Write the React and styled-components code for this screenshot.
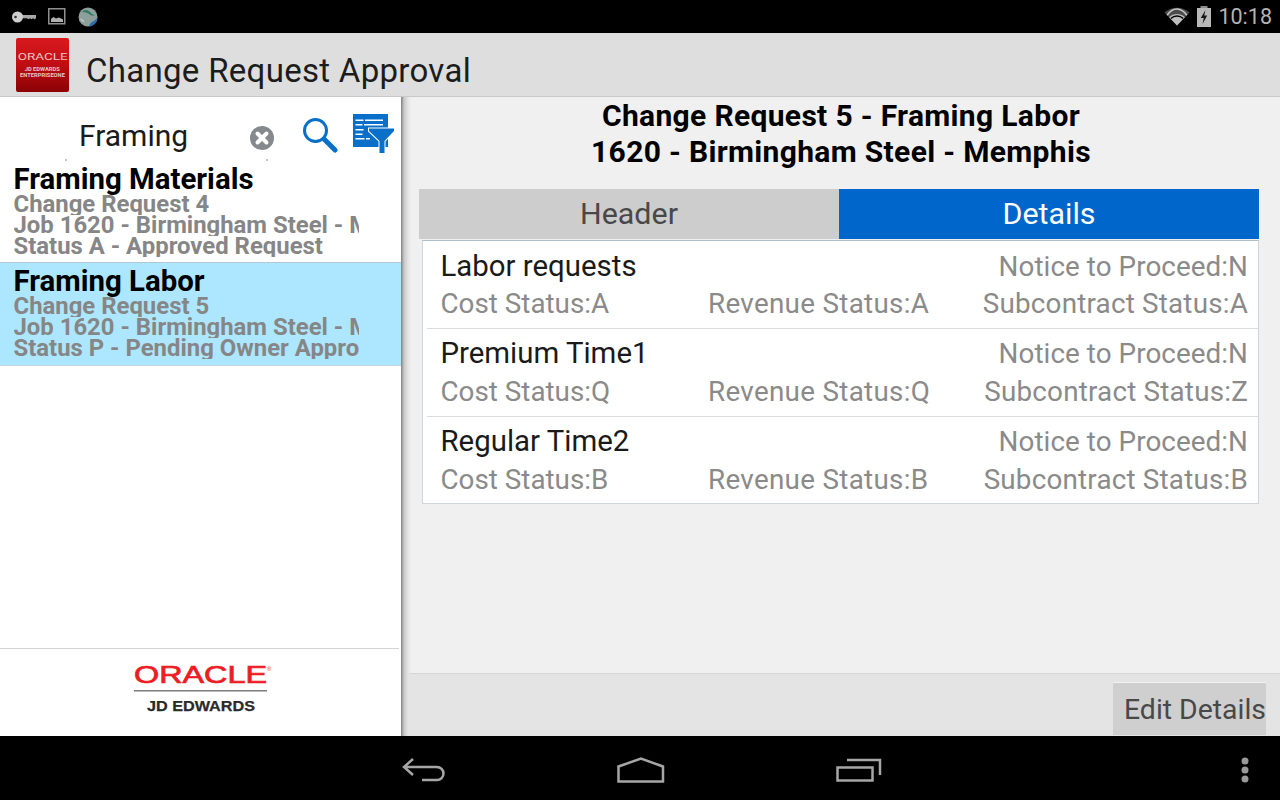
import React from 'react';
import styled, { createGlobalStyle } from 'styled-components';

const GlobalStyle = createGlobalStyle`
  html, body {
    margin: 0;
    padding: 0;
    background: #000;
  }
  * {
    box-sizing: border-box;
  }
`;

const Screen = styled.div`
  width: 1280px;
  height: 800px;
  display: flex;
  flex-direction: column;
  overflow: hidden;
  font-family: Roboto, "Liberation Sans", sans-serif;
  background: #000;
`;

const StatusBar = styled.div`
  height: 33px;
  flex: none;
  display: flex;
  align-items: center;
  justify-content: space-between;
  padding: 0 8px 0 12px;
  background: #000;
`;

const StatusGroup = styled.div`
  display: flex;
  align-items: center;
  gap: ${(p) => p.$gap}px;
`;

const Clock = styled.span`
  font-size: 21.5px;
  line-height: 33px;
  color: #b4b4b4;
`;

const ActionBar = styled.div`
  height: 64px;
  flex: none;
  display: flex;
  align-items: center;
  gap: 17px;
  padding: 0 0 0 16px;
  background: #dedede;
  border-bottom: 1px solid #c8c8c8;
`;

const AppIcon = styled.div`
  width: 53px;
  height: 54px;
  margin-top: 1px;
  display: flex;
  flex-direction: column;
  align-items: center;
  justify-content: center;
  border-radius: 2px;
  color: #ecc4c4;
  background: linear-gradient(180deg, #d81a1f 0%, #c00d12 50%, #8a0104 100%);
`;

const AppIconBrand = styled.span`
  font-size: 9px;
  line-height: 10px;
  margin-bottom: 4px;
  font-weight: 400;
  transform: scaleX(1.5);
`;

const AppIconLine = styled.span`
  font-size: 5px;
  line-height: 6px;
  font-weight: 700;
  white-space: nowrap;
  transform: scaleX(1.15);
`;

const AppTitle = styled.h1`
  margin: 12px 0 0;
  font-size: 33px;
  font-weight: 400;
  letter-spacing: 0.3px;
  color: #1c1c1c;
`;

const Body = styled.div`
  flex: 1;
  display: flex;
  min-height: 0;
`;

const Sidebar = styled.aside`
  width: 401px;
  flex: none;
  display: flex;
  flex-direction: column;
  background: #fff;
`;

const SearchRow = styled.div`
  height: 64px;
  flex: none;
  position: relative;
  display: flex;
  align-items: flex-start;
`;

const SearchText = styled.span`
  margin: 21px 0 0 79px;
  width: 171px;
  font-size: 30px;
  line-height: 36px;
  color: #1a1a1a;
`;

const SearchIconSlot = styled.div`
  display: flex;
  margin: ${(p) => p.$top}px 0 0 ${(p) => p.$left}px;
`;

/* the faint corner marks the text field leaves at its bottom edge */
const FieldTick = styled.span`
  position: absolute;
  bottom: 0;
  left: ${(p) => p.$left}px;
  width: 2px;
  height: 2px;
  background: #c4c4c4;
`;

const ResultList = styled.div`
  flex: 1;
  min-height: 0;
`;

const Result = styled.div`
  height: ${(p) => (p.$selected ? 103 : 102)}px;
  padding: 3px 42px 0 13.5px;
  overflow: hidden;
  background: ${(p) => (p.$selected ? '#ade6ff' : '#fff')};
  border-bottom: 1px solid ${(p) => (p.$selected ? '#c8d4da' : '#b4c8d2')};
`;

const ResultTitle = styled.div`
  font-size: 29.4px;
  line-height: 30px;
  font-weight: 700;
  color: #000;
  white-space: nowrap;
`;

const ResultLine = styled.div`
  font-size: 23.9px;
  line-height: 21px;
  font-weight: 700;
  color: #868686;
  white-space: nowrap;
  overflow: hidden;
`;

const BrandFooter = styled.div`
  height: 88px;
  flex: none;
  display: flex;
  justify-content: center;
  margin-right: 2px;
  padding-top: 14px;
  padding-left: 6px;
  border-top: 1px solid #d4d4d4;
`;

const Detail = styled.main`
  flex: 1;
  min-width: 0;
  position: relative;
  display: flex;
  flex-direction: column;
  background: #f0f0f0;

  /* shadow the list pane throws over this pane */
  &::before {
    content: '';
    position: absolute;
    top: 0;
    bottom: 0;
    left: 0;
    width: 10px;
    background: linear-gradient(90deg, #808080, #c8c8c8 3px, #e4e4e4 7px, rgba(240, 240, 240, 0));
  }
`;

const DetailContent = styled.div`
  flex: 1;
  padding: 0 21px 0 18px;
`;

const DetailHeading = styled.h2`
  margin: 0;
  height: 92px;
  padding: 1px 0 0 4px;
  font-size: 30px;
  line-height: 36px;
  font-weight: 700;
  letter-spacing: 0.33px;
  text-align: center;
  color: #000;
`;

const Tabs = styled.div`
  display: grid;
  grid-template-columns: 1fr 1fr;
  height: 50px;
`;

const Tab = styled.div`
  display: flex;
  align-items: center;
  justify-content: center;
  padding-bottom: 1px;
  font-size: 30.4px;
  color: ${(p) => (p.$active ? '#fff' : '#484848')};
  background: ${(p) => (p.$active ? '#0066cc' : '#cdcdcd')};
`;

const Rows = styled.div`
  margin: 1px 0 0 3px;
  background: #fff;
  border: 1px solid #cfd6da;
  border-top: 1px solid #aebfcc;
`;

const RowTop = styled.div`
  display: flex;
  align-items: baseline;
  justify-content: space-between;
  height: 40px;
`;

const Row = styled.div`
  height: ${(p) => (p.$last ? 86 : 88)}px;
  margin-left: 4px;
  padding: 5px 10px 0 13.5px;
  border-bottom: ${(p) => (p.$last ? 'none' : '1px solid #dcdcdc')};

  &:first-child ${RowTop} {
    padding-top: 1px;
  }
`;

const RowName = styled.span`
  font-size: 29.4px;
  line-height: 38px;
  color: #1a1a1a;
`;

const RowBottom = styled.div`
  display: grid;
  grid-template-columns: 267.5px 1fr auto;
`;

const StatusText = styled.span`
  font-size: 27.8px;
  line-height: 36px;
  letter-spacing: ${(p) => p.$track || 0}px;
  color: #8a8a8a;
  white-space: nowrap;
`;

const ActionFooter = styled.div`
  height: 63px;
  flex: none;
  display: flex;
  justify-content: flex-end;
  padding: 8px 14px 0 0;
  background: #e4e4e4;
  border-top: 1px solid #d6d6d6;
`;

const EditButton = styled.button`
  width: 153px;
  height: 53px;
  padding: 0 0 0 11px;
  border: none;
  border-top: 1px solid #f2f2f2;
  font-family: inherit;
  font-size: 28.4px;
  text-align: left;
  white-space: nowrap;
  color: #484848;
  background: #cfcfcf;
`;

const NavBar = styled.nav`
  height: 64px;
  flex: none;
  display: grid;
  grid-template-columns: 402px 215px 219px 1fr 40px;
  align-items: center;
  padding-top: 3px;
  background: #000;
`;

const NavCell = styled.div`
  grid-column: ${(p) => p.$col};
  display: flex;
  align-items: center;
`;

const KeyIcon = () => (
  <svg width="24" height="14" viewBox="0 0 24 14">
    <path d="M8 5h16v3.200l-1.500 1-1.500-1-1.500 1-1.500-1-1.500 1-1.500-1H8z" fill="#a8a8a8" />
    <circle cx="5.500" cy="7" r="5.500" fill="#cfcfcf" />
    <circle cx="3.500" cy="7" r="1.300" fill="#333" />
  </svg>
);

const PictureIcon = () => (
  <svg width="18" height="17" viewBox="0 0 18 17">
    <rect x="0.75" y="0.75" width="16" height="15" fill="none" stroke="#8f8f8f" strokeWidth="1.500" />
    <path d="M3 14v-3l2.500-2 2.500 1.500 3-1 2 1 2 1v2.500z" fill="#b0b0b0" />
  </svg>
);

const GlobeIcon = () => (
  <svg width="20" height="20" viewBox="0 0 20 20">
    <circle cx="10" cy="10" r="9.500" fill="#8d9f9b" />
    <path d="M11 19.500c5-.5 8-4 8.500-8-2 .500-3 2.500-4.500 3s-3 2-4 5z" fill="#2b6cab" />
    <path d="M4 5c3-3 6-2 8 0 1.500 2 3 3 5 3-2 1.500-5 0-6.500-1.500C8 5 6 5 4 5z" fill="#2d7b60" />
    <path d="M2 11c1 3 3 4 5 4-1-1.500-3-2.500-5-4z" fill="#c6d2cc" />
  </svg>
);

const WifiIcon = () => (
  <svg width="26" height="19" viewBox="0 0 26 19">
    <path d="M13 18.500 0.500 5.500C7.500-1 18.500-1 25.500 5.500z" fill="#4c4c4c" />
    <path d="M13 18.500 5 10.200C9.600 6 16.400 6 21 10.200z" fill="#bcbcbc" />
    <path d="M3.200 8.200C9-.2 17 .2 22.800 8.200" fill="none" stroke="#c8c8c8" strokeWidth="1.600" />
    <path d="M6.800 11.500c3.500-3.300 9-3.300 12.400 0" fill="none" stroke="#000" strokeWidth="1.400" />
  </svg>
);

const BatteryIcon = () => (
  <svg width="14" height="21" viewBox="0 0 14 21">
    <rect x="3.500" y="0" width="7" height="3" fill="#8a8a8a" />
    <rect x="0" y="2" width="14" height="19" fill="#b8b8b8" />
    <path d="M8.500 4 3.800 12h3l-1.300 6 4.700-8.500h-3z" fill="#161616" />
  </svg>
);

const ClearIcon = () => (
  <svg width="24" height="24" viewBox="0 0 24 24">
    <circle cx="12" cy="12" r="12" fill="#85888c" />
    <path d="M7.500 7.500l9 9M16.500 7.500l-9 9" stroke="#fff" strokeWidth="4" strokeLinecap="round" />
  </svg>
);

const SearchIcon = () => (
  <svg width="36" height="36" viewBox="0 0 36 36">
    <circle cx="13.500" cy="13.500" r="11" fill="none" stroke="#0a6fc9" strokeWidth="3" />
    <path d="M22 22l11 11" stroke="#0a6fc9" strokeWidth="5" strokeLinecap="round" />
  </svg>
);

const FilterIcon = () => (
  <svg width="41" height="39" viewBox="0 0 41 39">
    <rect x="0" y="0" width="35" height="33" fill="#0a6fc9" />
    <path d="M2.500 5.500h8v1.600h-8zM12 5.500h18v1.600H12zM2.500 10h7v1.600h-7zM11 10h19v1.600H11zM2.500 15h8v1.600h-8zM2.500 19.500h7v1.600h-7zM2.500 24h9v1.600h-9zM13 24h4v1.600h-4z" fill="#fff" />
    <path d="M16 14.500h25v2.500l-9.500 10v12h-5V27L16 17z" fill="#0a6fc9" stroke="#fff" strokeWidth="2" paintOrder="stroke" />
  </svg>
);

const OracleLogo = () => (
  <svg width="138" height="60" viewBox="0 0 138 60">
    <text x="0" y="20" fontFamily="'Liberation Sans', sans-serif" fontSize="23.500" fill="#ed1c24" stroke="#ed1c24" strokeWidth="0.700" textLength="133" lengthAdjust="spacingAndGlyphs">ORACLE</text>
    <text x="133" y="8" fontFamily="'Liberation Sans', sans-serif" fontSize="6" fill="#ed1c24">®</text>
    <rect x="0" y="27" width="133" height="1.500" fill="#7d7d7d" />
    <text x="13" y="48" fontFamily="'Liberation Sans', sans-serif" fontWeight="700" fontSize="15.500" fill="#2a2a2a" stroke="#2a2a2a" strokeWidth="0.250" textLength="108" lengthAdjust="spacingAndGlyphs">JD EDWARDS</text>
  </svg>
);

const BackIcon = () => (
  <svg width="44" height="26" viewBox="0 0 44 26" fill="none" stroke="#a6a6a6" strokeWidth="2.500">
    <path d="M11 2 2 10l9 8M2 10h33a6.500 6.500 0 0 1 0 13H20" />
  </svg>
);

const HomeIcon = () => (
  <svg width="48" height="26" viewBox="0 0 48 26" fill="none" stroke="#a6a6a6" strokeWidth="2.500">
    <path d="M1.500 24.500V9.500L24 1.500l22 8v15z" />
  </svg>
);

const RecentsIcon = () => (
  <svg width="46" height="24" viewBox="0 0 46 24" fill="none" stroke="#a6a6a6" strokeWidth="2.500">
    <rect x="1.500" y="9.500" width="35" height="13" />
    <path d="M11 2h33v15" />
  </svg>
);

const MenuIcon = () => (
  <svg width="10" height="28" viewBox="0 0 10 28" fill="#9a9a9a">
    <circle cx="5" cy="5" r="3.500" />
    <circle cx="5" cy="14" r="3.500" />
    <circle cx="5" cy="23" r="3.500" />
  </svg>
);

const results = [
  {
    title: 'Framing Materials',
    lines: ['Change Request 4', 'Job 1620 - Birmingham Steel - Memphis', 'Status A - Approved Request'],
  },
  {
    title: 'Framing Labor',
    lines: ['Change Request 5', 'Job 1620 - Birmingham Steel - Memphis', 'Status P - Pending Owner Approval'],
    selected: true,
  },
];

const details = [
  { name: 'Labor requests', cost: 'A', revenue: 'A', subcontract: 'A' },
  { name: 'Premium Time1', cost: 'Q', revenue: 'Q', subcontract: 'Z' },
  { name: 'Regular Time2', cost: 'B', revenue: 'B', subcontract: 'B' },
];

export default function App() {
  return (
    <Screen>
      <GlobalStyle />
      <StatusBar>
        <StatusGroup $gap={12}>
          <KeyIcon />
          <PictureIcon />
          <GlobeIcon />
        </StatusGroup>
        <StatusGroup $gap={7}>
          <WifiIcon />
          <BatteryIcon />
          <Clock>10:18</Clock>
        </StatusGroup>
      </StatusBar>

      <ActionBar>
        <AppIcon>
          <AppIconBrand>ORACLE</AppIconBrand>
          <AppIconLine>JD EDWARDS</AppIconLine>
          <AppIconLine>ENTERPRISEONE</AppIconLine>
        </AppIcon>
        <AppTitle>Change Request Approval</AppTitle>
      </ActionBar>

      <Body>
        <Sidebar>
          <SearchRow>
            <SearchText>Framing</SearchText>
            <SearchIconSlot $top={29} $left={0}>
              <ClearIcon />
            </SearchIconSlot>
            <SearchIconSlot $top={20} $left={28}>
              <SearchIcon />
            </SearchIconSlot>
            <SearchIconSlot $top={17} $left={15}>
              <FilterIcon />
            </SearchIconSlot>
            <FieldTick $left={65} />
            <FieldTick $left={266} />
          </SearchRow>
          <ResultList>
            {results.map((r) => (
              <Result key={r.title} $selected={r.selected}>
                <ResultTitle>{r.title}</ResultTitle>
                {r.lines.map((line) => (
                  <ResultLine key={line}>{line}</ResultLine>
                ))}
              </Result>
            ))}
          </ResultList>
          <BrandFooter>
            <OracleLogo />
          </BrandFooter>
        </Sidebar>

        <Detail>
          <DetailContent>
            <DetailHeading>
              Change Request 5 - Framing Labor
              <br />
              1620 - Birmingham Steel - Memphis
            </DetailHeading>
            <Tabs>
              <Tab>Header</Tab>
              <Tab $active>Details</Tab>
            </Tabs>
            <Rows>
              {details.map((d, i) => (
                <Row key={d.name} $last={i === details.length - 1}>
                  <RowTop>
                    <RowName>{d.name}</RowName>
                    <StatusText $track={0.07}>Notice to Proceed:N</StatusText>
                  </RowTop>
                  <RowBottom>
                    <StatusText>Cost Status:{d.cost}</StatusText>
                    <StatusText $track={0.3}>Revenue Status:{d.revenue}</StatusText>
                    <StatusText $track={0.2}>Subcontract Status:{d.subcontract}</StatusText>
                  </RowBottom>
                </Row>
              ))}
            </Rows>
          </DetailContent>
          <ActionFooter>
            <EditButton>Edit Details</EditButton>
          </ActionFooter>
        </Detail>
      </Body>

      <NavBar>
        <NavCell $col={2}>
          <BackIcon />
        </NavCell>
        <NavCell $col={3}>
          <HomeIcon />
        </NavCell>
        <NavCell $col={4}>
          <RecentsIcon />
        </NavCell>
        <NavCell $col={5}>
          <MenuIcon />
        </NavCell>
      </NavBar>
    </Screen>
  );
}
